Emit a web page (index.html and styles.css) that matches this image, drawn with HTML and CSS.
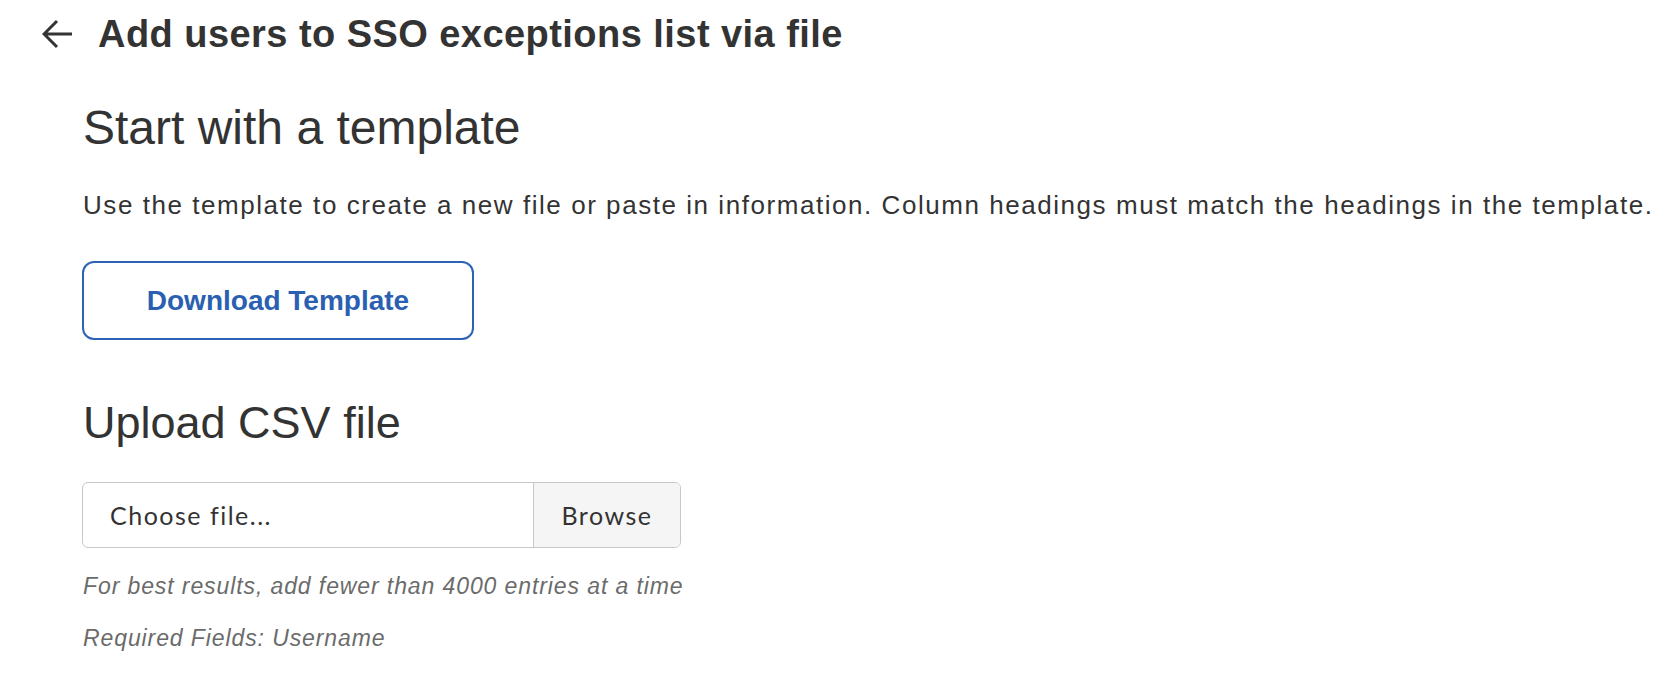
FILE: index.html
```html
<!DOCTYPE html>
<html>
<head>
<meta charset="utf-8">
<title>Add users to SSO exceptions list via file</title>
<link rel="stylesheet" href="styles.css">
</head>
<body>
	<div class="page">
		<div class="head">
			<a class="back" href="#">
				<svg width="32" height="30" viewBox="0 0 32 30"><path d="M30 15H2M15 2L2 15l13 13" fill="none" stroke="#333" stroke-width="3"/></svg>
			</a>
			<h1 class="title">Add users to SSO exceptions list via file</h1>
		</div>

		<div class="content">
			<h2 class="sec1">Start with a template</h2>
			<p class="intro">Use the template to create a new file or paste in information. Column headings must match the headings in the template.</p>
			<div class="btn">Download Template</div>

			<h2 class="sec2">Upload CSV file</h2>
			<div class="file">
				<span class="choose">Choose file...</span>
				<span class="browse">Browse</span>
			</div>
			<p class="note first">For best results, add fewer than 4000 entries at a time</p>
			<p class="note">Required Fields: Username</p>
		</div>
	</div>
</body>
</html>
```

FILE: styles.css
```css
*{margin:0; padding:0;}
body{background:#fff; color:#333; font-family:"Liberation Sans", Arial, sans-serif;}

.head{display:flex; align-items:center; padding:9px 0 0 42px; height:50px;}
.head .back{display:flex; width:32px; height:30px; margin-right:24px;}
.head .title{font-size:38px; line-height:50px; font-weight:bold; letter-spacing:0.45px; white-space:nowrap;}

.content{padding-left:83px;}
.sec1{font-size:48px; line-height:56px; font-weight:normal; margin-top:41px; white-space:nowrap;}
.intro{font-size:26px; line-height:32px; letter-spacing:1.55px; margin-top:33px; white-space:nowrap;}

.btn{width:388px; height:75px; margin:40px 0 0 -1px; border:2px solid #2c63b5; border-radius:12px; display:flex; align-items:center; justify-content:center; color:#2a5fb1; font-size:28px; line-height:28px; font-weight:bold;}

.sec2{font-size:45px; line-height:52px; font-weight:normal; margin-top:57px; white-space:nowrap;}

.file{display:flex; width:597px; height:64px; margin:33px 0 0 -1px; border:1px solid #c8c8c8; border-radius:6px; overflow:hidden; font-family:Lato, "Liberation Sans", sans-serif; font-size:25px; letter-spacing:1.5px;}
.file .choose{flex:1; display:flex; align-items:center; padding-left:27px;}
.file .browse{width:146px; display:flex; align-items:center; justify-content:center; background:#f5f5f5; border-left:1px solid #c8c8c8;}

.note{font-size:23px; line-height:28px; font-style:italic; color:#6b6b6b; letter-spacing:0.9px; margin-top:24px; white-space:nowrap;}
```
